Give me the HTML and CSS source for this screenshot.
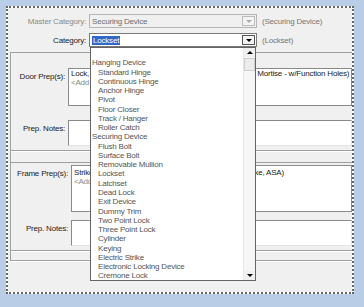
FILE: index.html
```html
<!DOCTYPE html>
<html lang="en">
<head>
  <meta charset="UTF-8">
  <title>Hardware Prep</title>
  <link rel="stylesheet" href="styles.css">
</head>
<body>

  <div class="win">

    <!-- Category header -->
    <div class="head">
      <div class="row">
        <span class="lbl dis">Master Category:</span>
        <div class="combo dis">
          <span class="val">Securing Device</span>
          <span class="btn"><i></i></span>
        </div>
        <span class="note">(Securing Device)</span>
      </div>
      <div class="row">
        <span class="lbl">Category:</span>
        <div class="combo">
          <span class="val"><b class="sel">Lockset</b></span>
          <span class="btn"><i></i></span>
        </div>
        <span class="note">(Lockset)</span>
      </div>
    </div>

    <div class="body">

      <!-- Door preps -->
      <div class="group door">
        <div class="field">
          <span class="lbl2">Door Prep(s):</span>
          <div class="list">
            <div>Lock, Cylindrical Lockset Prep (ANSI A115.2, 2-3/4 BS, Mortise - w/Function Holes)</div>
            <div class="add">&lt;Add Prep&gt;</div>
          </div>
        </div>
        <div class="field">
          <span class="lbl2">Prep. Notes:</span>
          <div class="memo"></div>
        </div>
      </div>

      <!-- Frame preps -->
      <div class="group frame">
        <div class="field">
          <span class="lbl2">Frame Prep(s):</span>
          <div class="list">
            <div>Strike, Standard Frame Prep (Cylindrical Lock Std Strike, ASA)</div>
            <div class="add">&lt;Add Prep&gt;</div>
          </div>
        </div>
        <div class="field">
          <span class="lbl2">Prep. Notes:</span>
          <div class="memo"></div>
        </div>
      </div>

      <div class="group tail"></div>
    </div>

    <!-- Open category dropdown -->
    <div class="drop">
      <ul>
        <li>&nbsp;</li>
        <li>Hanging Device</li>
        <li class="sub">Standard Hinge</li>
        <li class="sub">Continuous Hinge</li>
        <li class="sub">Anchor Hinge</li>
        <li class="sub">Pivot</li>
        <li class="sub">Floor Closer</li>
        <li class="sub">Track / Hanger</li>
        <li class="sub">Roller Catch</li>
        <li>Securing Device</li>
        <li class="sub">Flush Bolt</li>
        <li class="sub">Surface Bolt</li>
        <li class="sub">Removable Mullion</li>
        <li class="sub">Lockset</li>
        <li class="sub">Latchset</li>
        <li class="sub">Dead Lock</li>
        <li class="sub">Exit Device</li>
        <li class="sub">Dummy Trim</li>
        <li class="sub">Two Point Lock</li>
        <li class="sub">Three Point Lock</li>
        <li class="sub">Cylinder</li>
        <li class="sub">Keying</li>
        <li class="sub">Electric Strike</li>
        <li class="sub">Electronic Locking Device</li>
        <li class="sub">Cremone Lock</li>
      </ul>
      <div class="vbar">
        <span class="arr up"></span>
        <span class="thumb"></span>
        <span class="arr down"></span>
      </div>
    </div>

  </div>

</body>
</html>
```

FILE: styles.css
```css
body {
  margin: 0;
  padding: 8px;
  background: #b9cde6;
  font-family: 'Liberation Sans', Arial, sans-serif;
  font-size: 8px;
  letter-spacing: -0.2px;
  color: #222;
}

.win {
  position: relative;
  width: 344px;
  height: 284px;
  background: #f0f0f0;
  overflow: hidden;
  outline: 2px dotted #666;
  box-shadow: 0 0 0 2px #fff;
}

/* header */
.head {
  padding: 6px 0 5px;
  display: flex;
  flex-direction: column;
  gap: 5px;
}

.row {
  display: flex;
  align-items: center;
  height: 14px;
}

.lbl {
  width: 78px;
  margin-right: 3px;
  text-align: right;
}

.dis {
  color: #8a8a8a;
}

.combo {
  width: 168px;
  height: 14px;
  box-sizing: border-box;
  border: 1px solid #7a7a7a;
  background: #fff;
  display: flex;
  align-items: center;
}

.combo.dis {
  border-color: #b5b5b5;
  background: #f0f0f0;
  color: #6d6d6d;
}

.combo .val {
  flex: 1;
  padding-left: 2px;
}

.sel {
  font-weight: normal;
  background: #3169c6;
  color: #fff;
  padding: 0 1px;
}

.combo .btn {
  width: 13px;
  height: 10px;
  margin-right: 1px;
  box-sizing: border-box;
  border: 1px solid #555;
  background: #f4f4f4;
  display: flex;
  align-items: center;
  justify-content: center;
}

.combo.dis .btn {
  border-color: #bbb;
}

.btn i {
  width: 0;
  height: 0;
  border-left: 3px solid transparent;
  border-right: 3px solid transparent;
  border-top: 3px solid #000;
}

.combo.dis .btn i {
  border-top-color: #aaa;
}

.note {
  margin-left: 5px;
  color: #777;
}

/* scrolling body */
.body {
  margin-left: 2px;
  border-top: 1px solid #a0a0a0;
  border-left: 1px solid #a0a0a0;
}

.group {
  border-bottom: 1px solid #a0a0a0;
  box-shadow: 0 1px 0 #fff;
  display: flex;
  flex-direction: column;
  gap: 14px;
}

.door {
  padding: 15px 0 4px;
}

.frame {
  margin-top: 11px;
  border-top: 1px solid #a0a0a0;
  padding: 2px 0 4px;
  gap: 8px;
}

.tail {
  height: 9px;
}

.field {
  display: flex;
  align-items: flex-start;
}

.lbl2 {
  width: 54px;
  margin-right: 3px;
  padding-top: 4px;
  text-align: right;
  flex: none;
}

.frame .lbl2 {
  width: 57px;
}

.list {
  width: 300px;
  height: 38px;
  box-sizing: border-box;
  border: 1px solid #8a8a8a;
  background: #fff;
  padding: 1px 2px;
  line-height: 8.5px;
  white-space: nowrap;
  color: #222;
}

.frame .list {
  height: 47px;
  padding-top: 3px;
}

.list .add {
  color: #888;
}

.memo {
  width: 300px;
  height: 26px;
  box-sizing: border-box;
  border: 1px solid #8a8a8a;
  border-bottom-color: #e3e3e3;
  border-right-color: #e3e3e3;
  background: #fff;
}

/* dropdown */
.drop {
  position: absolute;
  left: 82px;
  top: 39px;
  width: 166px;
  height: 234px;
  box-sizing: border-box;
  border: 1px solid #646464;
  background: #fff;
  display: flex;
}

.drop ul {
  flex: 1;
  margin: 0;
  padding: 1px 0 0 1px;
  list-style: none;
  line-height: 9.27px;
  color: #555;
}

.drop li.sub {
  padding-left: 6px;
}

.vbar {
  width: 11px;
  background: #f6f6f6;
  border-left: 1px solid #e8e8e8;
  display: flex;
  flex-direction: column;
}

.arr {
  height: 9px;
  display: flex;
  align-items: center;
  justify-content: center;
  background: #f0f0f0;
}

.arr::before {
  content: '';
  border-left: 3px solid transparent;
  border-right: 3px solid transparent;
}

.arr.up::before {
  border-bottom: 3px solid #000;
}

.arr.down {
  margin-top: auto;
}

.arr.down::before {
  border-top: 3px solid #000;
}

.thumb {
  height: 13px;
  margin-top: 1px;
  box-sizing: border-box;
  border: 1px solid #cfcfcf;
  background: #ececec;
}
```
